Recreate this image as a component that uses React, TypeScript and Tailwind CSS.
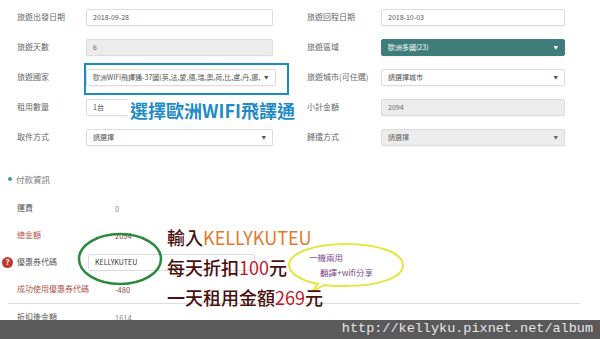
const cjk = { fontFamily: '"Noto Sans CJK TC", "Noto Sans", sans-serif' };

function Field({
  label,
  value,
  gray,
  select,
  teal,
  wide,
}: {
  label: string;
  value: string;
  gray?: boolean;
  select?: boolean;
  teal?: boolean;
  wide?: boolean;
}) {
  const box = teal
    ? "bg-[#3f7d7a] border-[#3f7d7a] text-white"
    : gray
    ? "bg-[#ececec] border-[#dcdcdc] text-[#666]"
    : "bg-white border-[#dcdcdc] text-[#555]";
  return (
    <div className="flex h-[30px] items-center">
      <div className={`${wide ? "w-[74px]" : "w-[69px]"} shrink-0 text-[8px] text-[#666]`}>{label}</div>
      <div
        className={`flex h-[17px] flex-1 items-center justify-between rounded-[2px] border px-[6px] text-[7px] shadow-[0_1px_1px_rgba(0,0,0,0.04)] ${box}`}
      >
        <span className="truncate pr-[4px]">{value}</span>
        {select && <span className="text-[4.5px]">▼</span>}
      </div>
    </div>
  );
}

function PayRow({
  label,
  value,
  red,
  icon,
  children,
}: {
  label: string;
  value?: string;
  red?: boolean;
  icon?: boolean;
  children?: React.ReactNode;
}) {
  return (
    <div className="flex h-[27px] items-center pl-[2px]">
      <div className="flex h-[11px] w-[15px] shrink-0 items-center">
        {icon && (
          <div className="flex h-[11px] w-[11px] items-center justify-center rounded-full bg-[#c0392b] text-[8px] font-bold leading-none text-white">
            ?
          </div>
        )}
      </div>
      <div className={`w-[98px] shrink-0 text-[8px] ${red ? "text-[#b0524a]" : "text-[#555]"}`}>
        {label}
      </div>
      {children ?? (
        <div className={`text-[7.5px] ${red ? "text-[#8a4a3e]" : "text-[#888]"}`}>{value}</div>
      )}
    </div>
  );
}

export default function App() {
  return (
    <div className="relative h-[339px] w-[600px] overflow-hidden bg-white" style={cjk}>
      {/* form */}
      <div className="flex gap-[34px] pl-[17px] pt-[2px]">
        <div className="flex w-[256px] flex-col">
          <Field label="旅遊出發日期" value="2018-09-28" />
          <Field label="旅遊天數" value="6" gray />
          <Field label="旅遊國家" value="歐洲WIFI飛譯通-37國(英,法,愛,德,瑞,奧,荷,比,盧,丹,挪," select />
          <Field label="租用數量" value="1台" />
          <Field label="取件方式" value="請選擇" select />
        </div>
        <div className="flex w-[258px] flex-col">
          <Field label="旅遊回程日期" value="2018-10-03" wide />
          <Field label="旅遊區域" value="歐洲多國(23)" select teal wide />
          <Field label="旅遊城市(可任選)" value="請選擇城市" select wide />
          <Field label="小計金額" value="2094" gray wide />
          <Field label="歸還方式" value="請選擇" select gray wide />
        </div>
      </div>

      {/* payment */}
      <div className="mt-[21px] flex items-center gap-[4px] pl-[8px] text-[8.5px] text-[#777]">
        <span className="h-[4px] w-[4px] rounded-full bg-[#3f9a8e]" />
        付款資訊
      </div>
      <div className="mt-[9px] flex flex-col">
        <PayRow label="運費" value="0" />
        <PayRow label="總金額" value="2094" red />
        <PayRow label="優惠券代碼" icon>
          <div className="-ml-[27px] flex h-[17px] w-[167px] items-center rounded-[2px] border border-[#dcdcdc] px-[6px] text-[7px] text-[#333]">
            KELLYKUTEU
          </div>
        </PayRow>
        <PayRow label="成功使用優惠券代碼" value="-480" red />
        <div className="ml-[8px] h-px w-[572px] bg-[#dddddd]" />
        <PayRow label="折扣後金額" value="1614" />
      </div>

      {/* annotations */}
      <div className="absolute left-[84px] top-[63px] h-[32px] w-[205px] border-[2.5px] border-[#1c8ac4]" />
      <div className="absolute left-[128px] top-[99px] bg-white px-[2px] text-[18px] font-semibold leading-[22px] text-[#1f8bc6]">
        選擇歐洲WIFI飛譯通
      </div>

      <svg className="pointer-events-none absolute left-0 top-0" width="600" height="339">
        <ellipse cx="120" cy="259" rx="41" ry="25" fill="none" stroke="#2a8a3c" strokeWidth="2.5" />
        <path
          d="M318 284 C 298 280 289 272 289 265 C 289 253 314 244 346 244 C 378 244 403 253 403 265 C 403 278 378 286 346 286 C 336 286 330 286 324 285 L 312 292 Z"
          fill="white"
          stroke="#e6e640"
          strokeWidth="2"
        />
      </svg>
      <div className="absolute left-[309px] top-[251px] text-[8.5px] leading-[12px] text-[#7a4a8a]">一機兩用</div>
      <div className="absolute left-[320px] top-[266px] text-[8.5px] leading-[12px] text-[#7a4a8a]">翻譯+wifi分享</div>

      <div className="absolute left-[167px] top-[226px] flex flex-col gap-[7px] text-[18px] font-medium leading-[23px] text-[#4a0f0f]">
        <div>
          輸入<span className="font-normal text-[#e07a2c]">KELLYKUTEU</span>
        </div>
        <div>
          每天折扣<span className="font-normal text-[#c0182a]">100</span>元
        </div>
        <div>
          一天租用金額<span className="font-normal text-[#c0182a]">269</span>元
        </div>
      </div>

      {/* watermark */}
      <div
        className="absolute bottom-0 left-0 flex h-[19px] w-full items-center justify-end bg-[#5a5a5a] pr-[7px] text-[13.5px] text-[#e6e6e6]"
        style={{ fontFamily: '"Liberation Mono", monospace' }}
      >
        http://kellyku.pixnet.net/album
      </div>
    </div>
  );
}
